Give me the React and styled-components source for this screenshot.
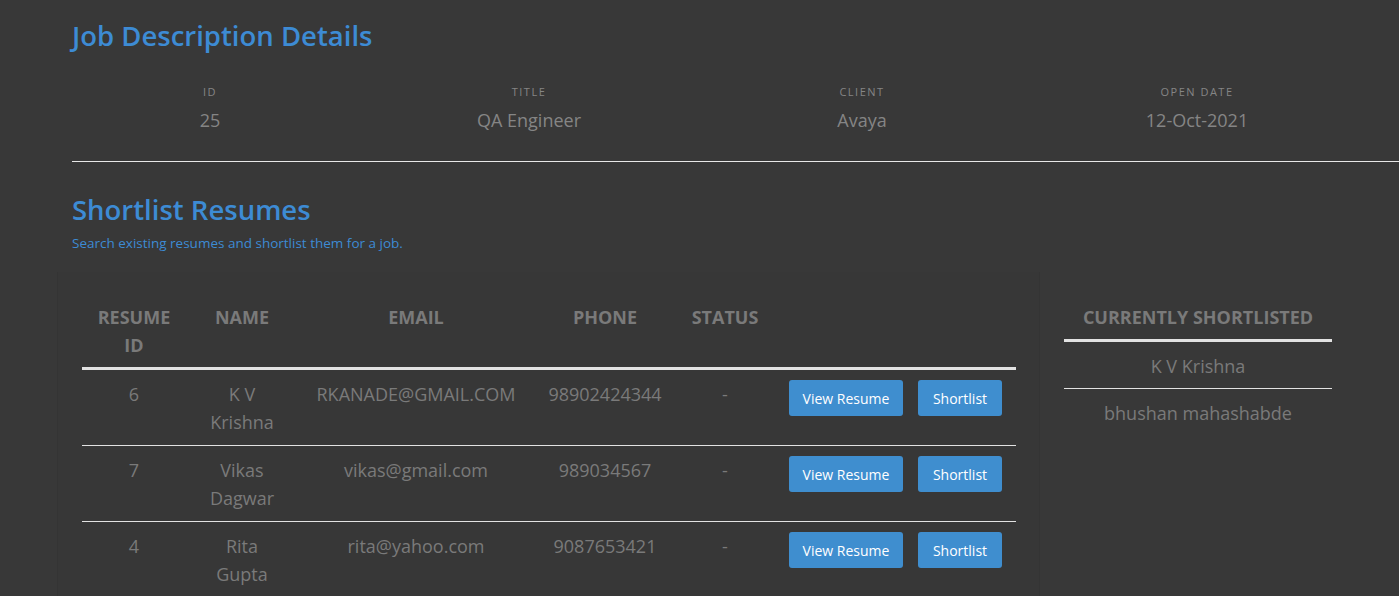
import React from 'react';
import styled, { createGlobalStyle } from 'styled-components';

const GlobalStyle = createGlobalStyle`
  html, body {
    margin: 0;
    padding: 0;
    background: #383838;
  }
  body {
    font-family: 'Open Sans', 'Noto Sans', sans-serif;
    color: #7a7a7a;
    overflow: hidden;
  }
`;

const Page = styled.div`
  padding: 19px 0 0 72px;
  min-height: 596px;
  box-sizing: border-box;
`;

const Heading = styled.h2`
  margin: 0;
  font-size: 27.5px;
  line-height: 34px;
  font-weight: 600;
  color: #3d8bd4;
`;

const SubText = styled.p`
  margin: 7px 0 0;
  font-size: 13.5px;
  line-height: 18px;
  color: #3d8bd4;
`;

const InfoGrid = styled.div`
  display: grid;
  grid-template-columns: 276px 362px 304px 366px;
  margin-top: 31px;
  padding-bottom: 28px;
  border-bottom: 1px solid #e8e8e8;
`;

const InfoCell = styled.div`
  display: flex;
  flex-direction: column;
  align-items: center;
`;

const InfoLabel = styled.span`
  font-size: 11px;
  line-height: 16px;
  letter-spacing: 1.5px;
  text-transform: uppercase;
  color: #858585;
`;

const InfoValue = styled.span`
  margin-top: 7px;
  font-size: 18px;
  line-height: 26px;
  color: #858585;
`;

const Section = styled.div`
  margin-top: 31px;
`;

const Board = styled.div`
  display: flex;
  margin: 20px 0 0 -15px;
`;

const Panel = styled.div`
  width: 983px;
  box-sizing: border-box;
  padding: 20px 24px 20px 24px;
  background: #373737;
  border-left: 1px solid #343434;
  border-right: 1px solid #343434;
`;

const Side = styled.div`
  flex: 1;
  padding: 20px 0 0 24px;
`;

const Table = styled.table`
  width: 934px;
  border-collapse: collapse;
  table-layout: fixed;
`;

const Th = styled.th`
  box-sizing: border-box;
  width: ${(p) => p.w}px;
  padding: 11px 14px 8px;
  font-size: 18px;
  line-height: 28px;
  font-weight: 700;
  text-transform: uppercase;
  color: #7a7a7a;
  text-align: center;
  vertical-align: top;
  border-bottom: 3px solid #e2e2e2;
`;

const Td = styled.td`
  padding: 10px 14px 9px;
  font-size: 18px;
  line-height: 28px;
  color: #7a7a7a;
  text-align: center;
  vertical-align: top;
  border-bottom: 1px solid #e2e2e2;
  overflow-wrap: break-word;
`;

const Actions = styled.td`
  padding: 10px 0 0 15px;
  vertical-align: top;
  border-bottom: 1px solid #e2e2e2;
  white-space: nowrap;
`;

const Button = styled.button`
  height: 36px;
  width: ${(p) => p.w}px;
  margin-right: 15px;
  padding: 0;
  border: none;
  border-radius: 3px;
  background: #3f8ecf;
  color: #fff;
  font-family: inherit;
  font-size: 14px;
  cursor: pointer;
`;

const ListBox = styled.div`
  width: 268px;
  text-align: center;
`;

const ListHead = styled.div`
  padding: 11px 0 8px;
  font-size: 18px;
  line-height: 28px;
  font-weight: 700;
  color: #7a7a7a;
  border-bottom: 3px solid #e2e2e2;
`;

const ListItem = styled.div`
  padding: 10px 0 8px;
  font-size: 18px;
  line-height: 28px;
  color: #7a7a7a;
  border-bottom: ${(p) => (p.last ? 'none' : '1px solid #e2e2e2')};
`;

const info = [
  ['ID', '25'],
  ['Title', 'QA Engineer'],
  ['Client', 'Avaya'],
  ['Open Date', '12-Oct-2021'],
];

const columns = [
  ['Resume ID', 104],
  ['Name', 112],
  ['Email', 236],
  ['Phone', 142],
  ['Status', 98],
  ['', 242],
];

const resumes = [
  { id: 6, name: 'K V Krishna', email: 'RKANADE@GMAIL.COM', phone: '98902424344' },
  { id: 7, name: 'Vikas Dagwar', email: 'vikas@gmail.com', phone: '989034567' },
  { id: 4, name: 'Rita Gupta', email: 'rita@yahoo.com', phone: '9087653421' },
];

const shortlisted = ['K V Krishna', 'bhushan mahashabde'];

const App = () => (
  <Page>
    <GlobalStyle />
    <Heading>Job Description Details</Heading>
    <InfoGrid>
      {info.map(([label, value]) => (
        <InfoCell key={label}>
          <InfoLabel>{label}</InfoLabel>
          <InfoValue>{value}</InfoValue>
        </InfoCell>
      ))}
    </InfoGrid>

    <Section>
      <Heading>Shortlist Resumes</Heading>
      <SubText>Search existing resumes and shortlist them for a job.</SubText>
    </Section>

    <Board>
      <Panel>
        <Table>
          <thead>
            <tr>
              {columns.map(([label, w]) => (
                <Th key={w} w={w}>
                  {label}
                </Th>
              ))}
            </tr>
          </thead>
          <tbody>
            {resumes.map((r) => (
              <tr key={r.id}>
                <Td>{r.id}</Td>
                <Td>{r.name}</Td>
                <Td>{r.email}</Td>
                <Td>{r.phone}</Td>
                <Td>-</Td>
                <Actions>
                  <Button w={114}>View Resume</Button>
                  <Button w={84}>Shortlist</Button>
                </Actions>
              </tr>
            ))}
          </tbody>
        </Table>
      </Panel>
      <Side>
        <ListBox>
          <ListHead>CURRENTLY SHORTLISTED</ListHead>
          {shortlisted.map((name, i) => (
            <ListItem key={name} last={i === shortlisted.length - 1}>
              {name}
            </ListItem>
          ))}
        </ListBox>
      </Side>
    </Board>
  </Page>
);

export default App;
